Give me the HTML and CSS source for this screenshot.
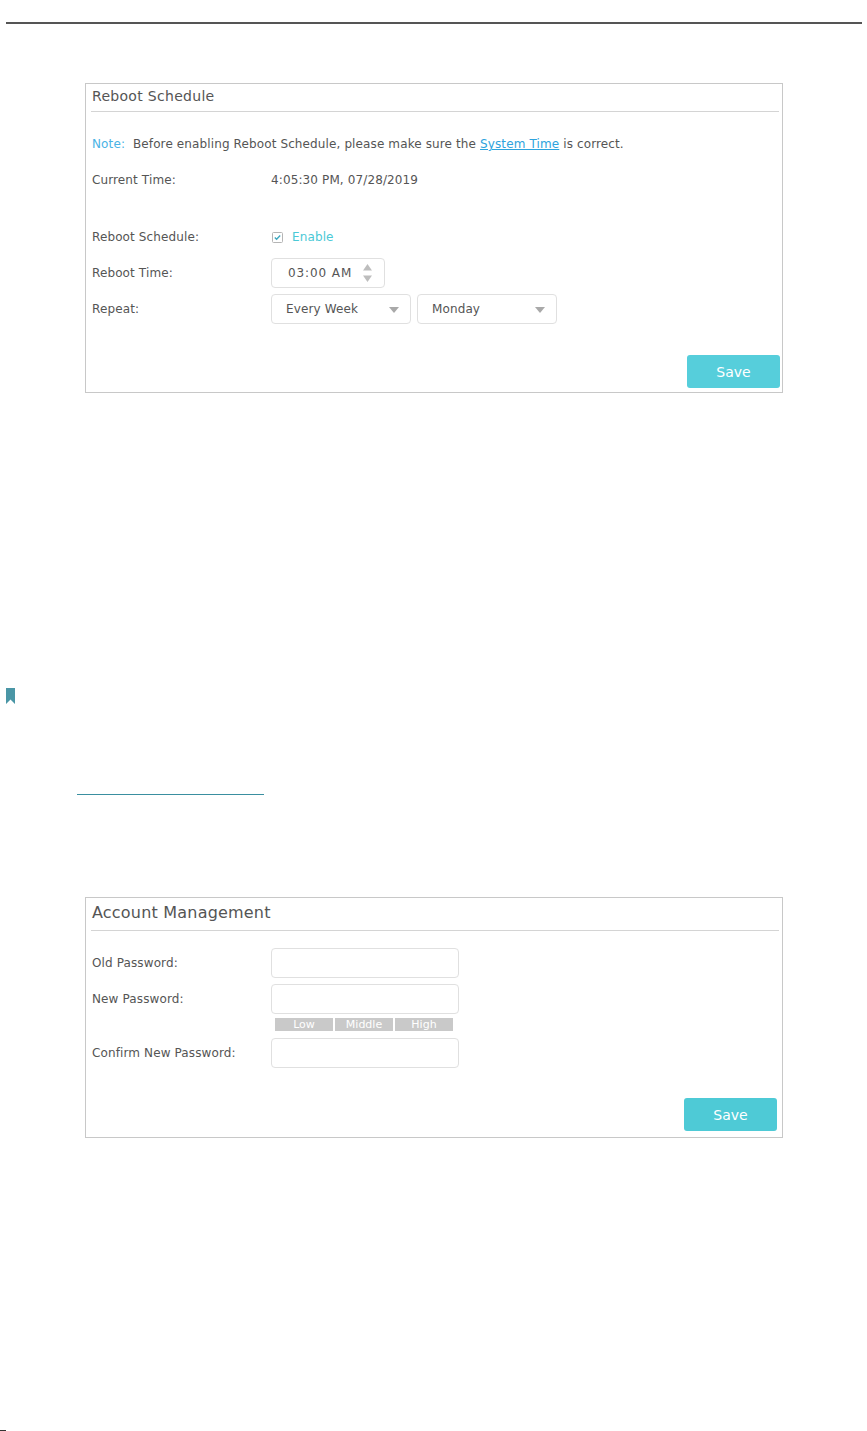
FILE: index.html
```html
<!DOCTYPE html>
<html>
<head>
<meta charset="utf-8">
<link rel="stylesheet" href="styles.css">
</head>
<body>
<div class="top-rule"></div>

<section class="panel reboot">
  <h2 class="panel-title">Reboot Schedule</h2>
  <div class="panel-body">
    <div class="row note-row"><span><span class="note">Note:</span>&nbsp; Before enabling Reboot Schedule, please make sure the <a class="link" href="#">System Time</a> is correct.</span></div>
    <div class="row"><span class="label">Current Time:</span><span class="value">4:05:30 PM, 07/28/2019</span></div>
    <div class="row gap-top"><span class="label">Reboot Schedule:</span>
      <span class="check">
        <svg width="11" height="11" viewBox="0 0 11 11"><rect x="0.5" y="0.5" width="10" height="10" rx="1" fill="#fff" stroke="#b5b5b5"/><path d="M2.8 5.6 L4.6 7.3 L8.2 3.6" fill="none" stroke="#3fa9c0" stroke-width="1.4"/></svg>
        <span class="enable">Enable</span>
      </span>
    </div>
    <div class="row"><span class="label">Reboot Time:</span>
      <span class="box time">03:00 AM
        <svg class="spin" width="11" height="20" viewBox="0 0 11 20"><path d="M5.5 1 L10 7.5 L1 7.5 Z" fill="#bdbdbd"/><path d="M5.5 19 L10 12.5 L1 12.5 Z" fill="#bdbdbd"/></svg>
      </span>
    </div>
    <div class="row"><span class="label">Repeat:</span>
      <span class="box select sel1">Every Week<svg class="caret" width="10" height="6" viewBox="0 0 10 6"><path d="M0 0 L10 0 L5 6 Z" fill="#a9a9a9"/></svg></span>
      <span class="box select sel2">Monday<svg class="caret" width="10" height="6" viewBox="0 0 10 6"><path d="M0 0 L10 0 L5 6 Z" fill="#a9a9a9"/></svg></span>
    </div>
    <div class="actions"><button class="save">Save</button></div>
  </div>
</section>

<div class="middle">
  <svg class="bookmark" width="10" height="16" viewBox="0 0 10 16"><path d="M0 0 H9 V16 L4.5 11.5 L0 16 Z" fill="#4a96a6"/></svg>
  <div class="link-line"></div>
</div>

<section class="panel account">
  <h2 class="panel-title big">Account Management</h2>
  <div class="panel-body acc-body">
    <div class="frow"><span class="label">Old Password:</span><span class="box pw"></span></div>
    <div class="frow"><span class="label">New Password:</span><span class="box pw"></span></div>
    <div class="strength"><span>Low</span><span>Middle</span><span>High</span></div>
    <div class="frow"><span class="label">Confirm New Password:</span><span class="box pw"></span></div>
    <div class="actions acc-actions"><button class="save">Save</button></div>
  </div>
</section>

<div class="corner"></div>
</body>
</html>
```

FILE: styles.css
```css
html, body {
  margin: 0;
  padding: 0;
  background: #fff;
}
body {
  width: 867px;
  height: 1431px;
  position: relative;
  font-family: "DejaVu Sans", Verdana, sans-serif;
  color: #555;
  font-size: 12px;
  letter-spacing: 0.12px;
}
.top-rule {
  margin: 22px 5px 0 6px;
  height: 0;
  border-top: 2px solid #555;
}
.panel {
  margin-left: 85px;
  width: 696px;
  border: 1px solid #c8c8c8;
  box-sizing: content-box;
}
.reboot {
  margin-top: 59px;
}
.panel-title {
  margin: 0 3px 0 5px;
  padding: 2px 0 4px 1px;
  line-height: 21px;
  font-size: 14px;
  letter-spacing: 0.3px;
  font-weight: normal;
  color: #555;
  border-bottom: 1px solid #d4d4d4;
}
.panel-title.big {
  font-size: 16px;
  letter-spacing: 0.2px;
  padding: 3px 0 6px 1px;
  line-height: 23px;
}
.panel-body {
  padding: 14px 2px 4px 6px;
}
.row {
  height: 36px;
  display: flex;
  align-items: center;
  white-space: nowrap;
}
.row.gap-top {
  margin-top: 21px;
}
.label {
  width: 179px;
  flex: none;
}
.note {
  color: #4ab3e5;
}
.link {
  color: #2ea3dd;
  text-decoration: underline;
}
.check {
  display: flex;
  align-items: center;
  gap: 9px;
  margin-left: 1px;
}
.check svg {
  display: block;
}
.enable {
  color: #4bc9d6;
}
.box {
  height: 28px;
  border: 1px solid #e0e0e0;
  border-radius: 4px;
  display: flex;
  align-items: center;
  box-sizing: content-box;
  color: #555;
  position: relative;
}
.time {
  width: 96px;
  padding-left: 16px;
  font-size: 12px;
  letter-spacing: 0.9px;
}
.spin {
  position: absolute;
  left: 90px;
  top: 4px;
}
.select {
  padding-left: 14px;
}
.sel1 {
  width: 124px;
}
.sel2 {
  width: 124px;
  margin-left: 6px;
}
.caret {
  position: absolute;
  right: 11px;
  top: 12px;
}
.actions {
  display: flex;
  justify-content: flex-end;
  margin-top: 28px;
}
.save {
  width: 93px;
  height: 33px;
  border: none;
  border-radius: 3px;
  background: #56cedb;
  color: #fff;
  font-family: "DejaVu Sans", Verdana, sans-serif;
  font-size: 14px;
  padding: 0;
}
.middle {
  height: 504px;
  position: relative;
}
.bookmark {
  position: absolute;
  left: 6px;
  top: 295px;
}
.link-line {
  position: absolute;
  left: 77px;
  top: 401px;
  width: 187px;
  border-top: 1px solid #3a8fa0;
}
.acc-body {
  padding: 17px 6px 6px 6px;
}
.frow {
  display: flex;
  align-items: center;
  height: 30px;
  margin-bottom: 6px;
  white-space: nowrap;
}
.pw {
  width: 186px;
  height: 28px;
}
.strength {
  display: flex;
  gap: 2px;
  margin: -2px 0 0 183px;
  height: 13px;
  letter-spacing: 0;
}
.strength span {
  width: 58px;
  background: #c9c9c9;
  color: #fff;
  font-size: 11px;
  line-height: 13px;
  text-align: center;
}
.strength + .frow {
  margin-top: 7px;
}
.acc-actions {
  margin-top: 30px;
  margin-right: -1px;
}
.account .save {
  background: #4ecad6;
}
.corner {
  position: absolute;
  left: 0;
  bottom: 0;
  width: 6px;
  height: 1px;
  background: #333;
}
```
